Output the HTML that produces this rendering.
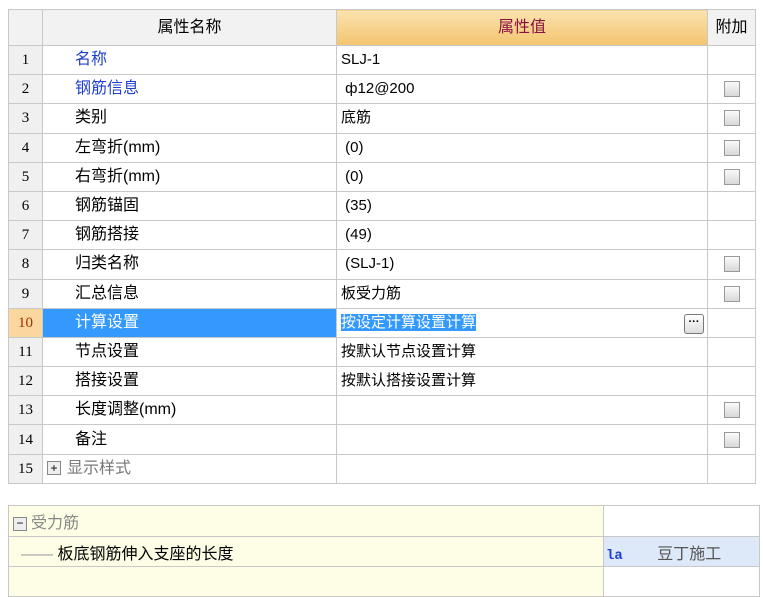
<!DOCTYPE html>
<html><head><meta charset="utf-8"><style>
body{margin:0;width:763px;height:582px;background:#fff;overflow:hidden;font-family:"Liberation Sans","Noto Sans CJK SC",sans-serif;font-size:16px;color:#000;position:relative}
.t{position:absolute;left:8px;top:9px;width:747px;border-collapse:collapse;table-layout:fixed}
.t td{border:1px solid #c8c8c8;height:28.2px;padding:0;white-space:nowrap;overflow:hidden;line-height:18px}
.t tr.h td{height:35px;background:#f2f2f2;text-align:center}
.t tr.h td.v{background:linear-gradient(#fbe3b0,#f3c46e);color:#8a1040}
.n{background:#f0f0f0;text-align:center;font-family:"Liberation Serif",serif;font-size:15px}
.nm{padding-left:32px!important}
.vl{padding-left:4px!important;font-size:15px}
.blue{color:#1f3fd0}
.cb{display:block;margin:auto;width:14px;height:14px;border:1px solid #9a9a9a;background:linear-gradient(#fafafa,#d8d8d8)}
.sel{background:#3399ff;color:#fff}
.b{position:absolute;left:8px;top:505px;width:751px;border-collapse:collapse;table-layout:fixed}
.b td{border:1px solid #c8c8c8;height:29px;padding:0;white-space:nowrap}
</style></head><body>
<table class="t">
<colgroup><col style="width:34px"><col style="width:294px"><col style="width:371px"><col style="width:48px"></colgroup>
<tr class="h"><td></td><td>属性名称</td><td class="v">属性值</td><td>附加</td></tr>
<tr><td class="n">1</td><td class="nm blue">名称</td><td class="vl">SLJ-1</td><td></td></tr>
<tr><td class="n">2</td><td class="nm blue">钢筋信息</td><td class="vl">&nbsp;ф12@200</td><td><span class="cb"></span></td></tr>
<tr><td class="n">3</td><td class="nm">类别</td><td class="vl">底筋</td><td><span class="cb"></span></td></tr>
<tr><td class="n">4</td><td class="nm">左弯折(mm)</td><td class="vl">&nbsp;(0)</td><td><span class="cb"></span></td></tr>
<tr><td class="n">5</td><td class="nm">右弯折(mm)</td><td class="vl">&nbsp;(0)</td><td><span class="cb"></span></td></tr>
<tr><td class="n">6</td><td class="nm">钢筋锚固</td><td class="vl">&nbsp;(35)</td><td></td></tr>
<tr><td class="n">7</td><td class="nm">钢筋搭接</td><td class="vl">&nbsp;(49)</td><td></td></tr>
<tr><td class="n">8</td><td class="nm">归类名称</td><td class="vl">&nbsp;(SLJ-1)</td><td><span class="cb"></span></td></tr>
<tr><td class="n">9</td><td class="nm">汇总信息</td><td class="vl">板受力筋</td><td><span class="cb"></span></td></tr>
<tr><td class="n" style="background:#fbd7a0;color:#a03000">10</td><td class="nm sel">计算设置</td><td class="vl" style="position:relative"><span style="background:#3399ff;color:#fff">按设定计算设置计算</span><span style="position:absolute;right:3px;top:5px;width:18px;height:18px;border:1px solid #777;border-radius:3px;background:linear-gradient(#fff,#ddd);font-size:11px;line-height:14px;text-align:center;font-weight:bold">···</span></td><td></td></tr>
<tr><td class="n">11</td><td class="nm">节点设置</td><td class="vl">按默认节点设置计算</td><td></td></tr>
<tr><td class="n">12</td><td class="nm">搭接设置</td><td class="vl">按默认搭接设置计算</td><td></td></tr>
<tr><td class="n">13</td><td class="nm">长度调整(mm)</td><td class="vl"></td><td><span class="cb"></span></td></tr>
<tr><td class="n">14</td><td class="nm">备注</td><td class="vl"></td><td><span class="cb"></span></td></tr>
<tr><td class="n">15</td><td style="padding-left:4px;color:#777"><span style="display:inline-block;width:12px;height:12px;border:1px solid #888;font-size:12px;line-height:12px;text-align:center;color:#000;background:#eee;margin-right:6px;vertical-align:middle">+</span>显示样式</td><td></td><td></td></tr>
</table>
<table class="b">
<colgroup><col style="width:595px"><col style="width:156px"></colgroup>
<tr><td style="background:#fefee6;color:#888;padding-left:4px;height:30px"><span style="display:inline-block;width:12px;height:12px;border:1px solid #888;font-size:12px;line-height:10px;text-align:center;color:#000;background:#eee;margin-right:4px;vertical-align:middle">−</span>受力筋</td><td></td></tr>
<tr><td style="background:#fefee6;padding-left:12px"><span style="color:#999">——</span> 板底钢筋伸入支座的长度</td><td style="background:#dde8f8;padding-left:2px"><b style="color:#1f3fd0;font-family:'Liberation Mono',monospace;font-size:14px">la</b> <span style="color:#555;margin-left:30px">豆丁施工</span></td></tr>
<tr><td style="background:#fefee6"></td><td></td></tr>
</table>
</body></html>
